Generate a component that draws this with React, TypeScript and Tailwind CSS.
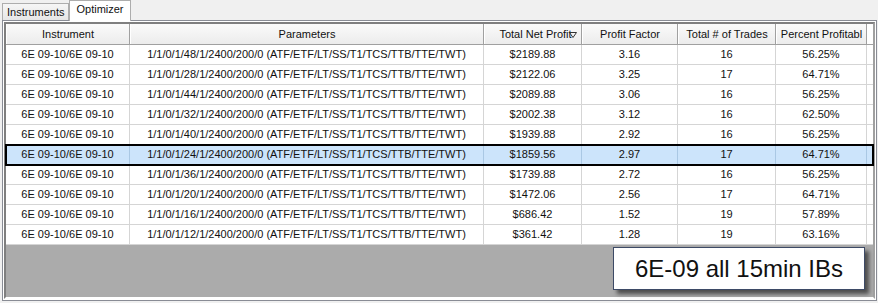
import React from 'react';

interface Row {
  step: number;
  profit: string;
  factor: string;
  trades: number;
  percent: string;
}

const rows: Row[] = [
  { step: 48, profit: '$2189.88', factor: '3.16', trades: 16, percent: '56.25%' },
  { step: 28, profit: '$2122.06', factor: '3.25', trades: 17, percent: '64.71%' },
  { step: 44, profit: '$2089.88', factor: '3.06', trades: 16, percent: '56.25%' },
  { step: 32, profit: '$2002.38', factor: '3.12', trades: 16, percent: '62.50%' },
  { step: 40, profit: '$1939.88', factor: '2.92', trades: 16, percent: '56.25%' },
  { step: 24, profit: '$1859.56', factor: '2.97', trades: 17, percent: '64.71%' },
  { step: 36, profit: '$1739.88', factor: '2.72', trades: 16, percent: '56.25%' },
  { step: 20, profit: '$1472.06', factor: '2.56', trades: 17, percent: '64.71%' },
  { step: 16, profit: '$686.42', factor: '1.52', trades: 19, percent: '57.89%' },
  { step: 12, profit: '$361.42', factor: '1.28', trades: 19, percent: '63.16%' },
];

const SELECTED = 5;

// column widths, left to right
const cols = ['w-[124px]', 'w-[354px]', 'w-[98px]', 'w-[96px]', 'w-[98px]', 'w-[91px]'];

function SortGlyph() {
  return (
    <svg width="8" height="6" viewBox="0 0 8 6" className="-ml-[3px] mt-[1px]">
      <path d="M0.5 0.5 H7.5 L4 5.5 Z" fill="none" stroke="#333" strokeWidth="1" />
    </svg>
  );
}

function HeaderCell({ w, children }: { w: string; children: React.ReactNode }) {
  return (
    <div
      className={`${w} h-full shrink-0 flex items-center justify-center border-r border-[#a0a0a0] border-l border-l-white bg-gradient-to-b from-[#fafafa] to-[#ececec] whitespace-nowrap overflow-hidden`}
    >
      {children}
    </div>
  );
}

export default function App() {
  return (
    <div
      className="relative w-[878px] h-[303px] bg-[#f0f0f0] text-[11px] text-[#111] overflow-hidden"
      style={{ fontFamily: '"Liberation Sans", Arial, sans-serif' }}
    >
      {/* tabs */}
      <div className="h-[20px] flex items-end pl-[2px]">
        <div className="h-[17px] px-[4px] flex items-center border border-b-0 border-[#adadad] bg-gradient-to-b from-[#f6f6f6] to-[#e6e6e6]">
          Instruments
        </div>
        <div className="relative z-10 h-[21px] -mb-px px-[6px] pb-[3px] flex items-center bg-white border border-b-0 border-[#adadad]">
          Optimizer
        </div>
      </div>

      {/* tab page */}
      <div className="ml-[2px] w-[875px] h-[281px] border border-[#898c95] bg-white p-[1px]">
        <div className="h-full flex flex-col border-l-2 border-t-2 border-[#7f7f7f] border-r-2 border-r-[#a0a0a0] border-b-2 border-b-white bg-[#ababab]">
          {/* header */}
          <div className="h-[21px] shrink-0 flex bg-[#f0f0f0] border-b border-[#a0a0a0]">
            <HeaderCell w={cols[0]}>Instrument</HeaderCell>
            <HeaderCell w={cols[1]}>Parameters</HeaderCell>
            <HeaderCell w={cols[2]}>
              <span className="ml-[10px]">Total Net Profit</span>
              <SortGlyph />
            </HeaderCell>
            <HeaderCell w={cols[3]}>Profit Factor</HeaderCell>
            <HeaderCell w={cols[4]}>Total # of Trades</HeaderCell>
            <HeaderCell w={cols[5]}>Percent Profitabl</HeaderCell>
            <div className="flex-1 bg-white" />
          </div>

          {/* rows */}
          {rows.map((r, i) => {
            const sel = i === SELECTED;
            const cellBg = sel ? 'bg-[#cce4fb] border-[#aac8e4]' : 'bg-white border-[#d5d5d5]';
            const cell = `h-full shrink-0 flex items-center justify-center border-r border-b ${cellBg}`;
            return (
              <div
                key={r.step}
                className={`h-[20px] shrink-0 flex ${sel ? 'relative z-10 outline-2 outline-black -outline-offset-1' : ''}`}
              >
                <div className={`${cols[0]} ${cell}`}>6E 09-10/6E 09-10</div>
                <div className={`${cols[1]} ${cell}`}>
                  {`1/1/0/1/${r.step}/1/2400/200/0 (ATF/ETF/LT/SS/T1/TCS/TTB/TTE/TWT)`}
                </div>
                <div className={`${cols[2]} ${cell}`}>{r.profit}</div>
                <div className={`${cols[3]} ${cell}`}>{r.factor}</div>
                <div className={`${cols[4]} ${cell}`}>{r.trades}</div>
                <div className={`${cols[5]} ${cell}`}>{r.percent}</div>
                <div className={`flex-1 h-full border-b ${sel ? 'bg-[#cce4fb] border-[#aac8e4]' : 'bg-white border-[#d5d5d5]'}`} />
              </div>
            );
          })}
        </div>
      </div>

      {/* caption label */}
      <div className="absolute left-[613px] top-[247px] w-[252px] h-[43px] bg-white border border-[#3d4a66] flex items-center justify-center text-[24px] text-[#111] shadow-[4px_4px_4px_rgba(0,0,0,0.55)]">
        6E-09 all 15min IBs
      </div>
    </div>
  );
}
